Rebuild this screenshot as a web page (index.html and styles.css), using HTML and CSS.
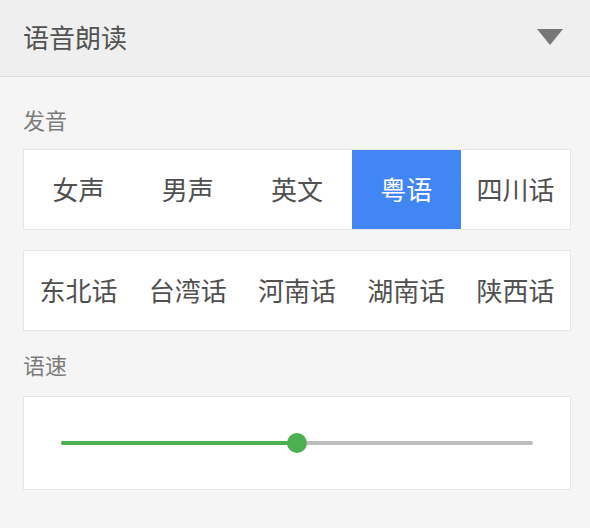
FILE: index.html
```html
<!DOCTYPE html>
<html lang="zh-CN">
<head>
<meta charset="utf-8">
<title>语音朗读</title>
<link rel="stylesheet" href="styles.css">
</head>
<body>
<header class="header">
  <span class="title">语音朗读</span>
  <svg class="caret" width="26" height="16" viewBox="0 0 26 16"><path d="M0 0 H26 L13 16 Z" fill="#777"/></svg>
</header>
<main class="content">
  <div class="label label-first">发音</div>
  <div class="options">
    <div class="opt">女声</div>
    <div class="opt">男声</div>
    <div class="opt">英文</div>
    <div class="opt active">粤语</div>
    <div class="opt">四川话</div>
  </div>
  <div class="options options-second">
    <div class="opt">东北话</div>
    <div class="opt">台湾话</div>
    <div class="opt">河南话</div>
    <div class="opt">湖南话</div>
    <div class="opt">陕西话</div>
  </div>
  <div class="label label-second">语速</div>
  <div class="slider-box">
    <div class="track">
      <div class="fill" style="width:50%"></div>
      <div class="thumb" style="left:50%"></div>
    </div>
  </div>
</main>
</body>
</html>
```
FILE: styles.css
```css
html, body {
  margin: 0;
  padding: 0;
}
body {
  background: #f5f5f5;
  font-family: "Noto Sans CJK SC", "Noto Sans", sans-serif;
  width: 590px;
  height: 528px;
  overflow: hidden;
}
.header {
  height: 76px;
  border-bottom: 1px solid #dedede;
  background: #efefef;
  display: flex;
  align-items: center;
  justify-content: space-between;
  padding: 0 27px 0 23px;
}
.title {
  font-size: 26px;
  color: #525252;
  line-height: 30px;
  margin-top: -2px;
}
.caret {
  display: block;
  margin-top: -2px;
}
.content {
  padding: 0 19px 0 23px;
}
.label {
  font-size: 22px;
  line-height: 30px;
  color: #7c7c7c;
}
.label-first {
  margin-top: 27px;
  margin-bottom: 15px;
}
.label-second {
  margin-top: 18px;
  margin-bottom: 17px;
}
.options {
  display: grid;
  grid-template-columns: repeat(5, 1fr);
  height: 79px;
  border: 1px solid #e6e6e6;
  background: #fff;
}
.options-second {
  margin-top: 20px;
}
.opt {
  display: flex;
  align-items: center;
  justify-content: center;
  font-size: 26px;
  color: #505050;
  padding-bottom: 2px;
}
.opt.active {
  background: #4286f5;
  color: #fff;
}
.slider-box {
  height: 92px;
  border: 1px solid #e6e6e6;
  background: #fff;
  display: flex;
  align-items: center;
  padding: 0 37px;
}
.track {
  position: relative;
  flex: 1;
  height: 4px;
  border-radius: 2px;
  background: #bdbdbd;
}
.fill {
  height: 100%;
  border-radius: 2px;
  background: #4caf50;
}
.thumb {
  position: absolute;
  top: 50%;
  width: 20px;
  height: 20px;
  margin: -10px 0 0 -10px;
  border-radius: 50%;
  background: #4caf50;
}
```
